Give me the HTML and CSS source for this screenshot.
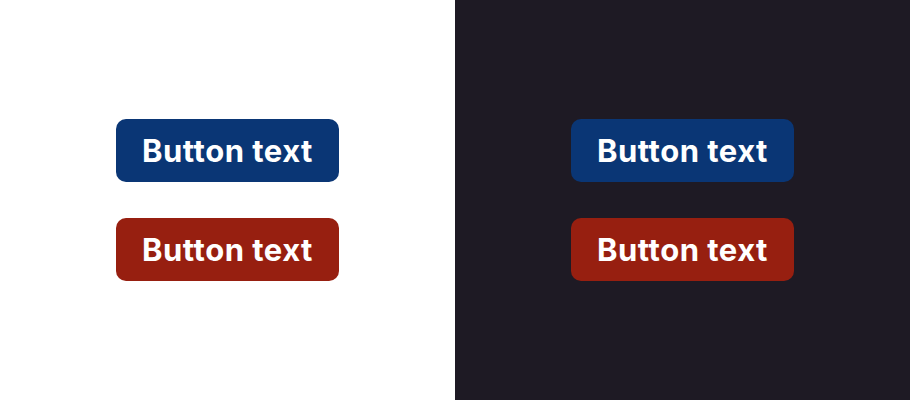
FILE: index.html
```html
<!DOCTYPE html>
<html lang="en">
<head>
    <meta charset="UTF-8">
    <meta name="viewport" content="width=device-width, initial-scale=1.0">
    <title>Buttons</title>
    <link rel="stylesheet" href="styles.css">
</head>
<body>
    <div class="panels">
        <div class="panel light">
            <button type="button" class="btn btn-primary">Button text</button>
            <button type="button" class="btn btn-danger">Button text</button>
        </div>
        <div class="panel dark">
            <button type="button" class="btn btn-primary">Button text</button>
            <button type="button" class="btn btn-danger">Button text</button>
        </div>
    </div>
</body>
</html>
```

FILE: styles.css
```css
:root {
    --primary-color: #0a3675;
    --danger-color: #971f10;
    --dark-bg: #1e1a24;
}

* {
    box-sizing: border-box;
    margin: 0;
    padding: 0;
}

body {
    font-family: 'Inter', sans-serif;
    background-color: white;
}

.panels {
    display: grid;
    grid-template-columns: 1fr 1fr;
    height: 400px;
}

.panel {
    display: flex;
    flex-direction: column;
    align-items: center;
    justify-content: center;
    gap: 36px;
}

.light {
    background-color: white;
}

.dark {
    background-color: var(--dark-bg);
}

.btn {
    display: flex;
    align-items: center;
    justify-content: center;
    width: 223px;
    height: 63px;
    border: none;
    border-radius: 10px;
    color: white;
    font-family: 'Inter', sans-serif;
    font-size: 31px;
    font-weight: 700;
    letter-spacing: 0.5px;
    cursor: pointer;
}

.btn-primary {
    background-color: var(--primary-color);
}

.btn-danger {
    background-color: var(--danger-color);
}
```
